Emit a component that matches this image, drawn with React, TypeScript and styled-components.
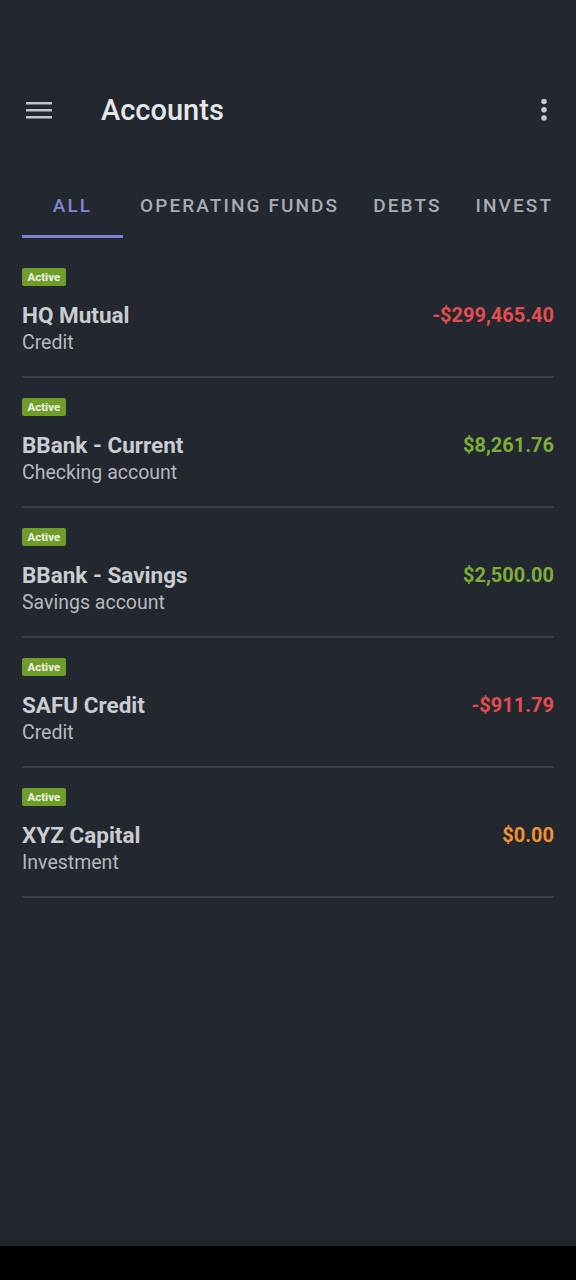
import React from "react";
import styled, { createGlobalStyle } from "styled-components";

const Global = createGlobalStyle`
  html, body { margin: 0; padding: 0; background: #000; }
  body { font-family: Roboto, "Noto Sans", "Liberation Sans", sans-serif; }
  * { box-sizing: border-box; }
`;

const Page = styled.div`
  width: 576px;
  height: 1280px;
  display: flex;
  flex-direction: column;
  background: #23272f;
  overflow: hidden;
`;

const StatusSpace = styled.div`
  height: 60px;
  flex: none;
`;

const Toolbar = styled.header`
  height: 100px;
  display: flex;
  align-items: center;
  padding: 0 22px 0 25px;
  flex: none;
`;

const IconButton = styled.button`
  width: 28px;
  height: 28px;
  padding: 0;
  border: 0;
  background: transparent;
  display: flex;
  align-items: center;
  justify-content: center;
`;

const Title = styled.h1`
  margin: 0 0 0 48px;
  font-size: 29px;
  font-weight: 500;
  color: #e6e7ea;
  flex: 1;
  letter-spacing: 0;
`;

const TabBar = styled.nav`
  margin-left: 22px;
  height: 78px;
  display: flex;
  flex: none;
`;

const Tab = styled.div<{ $active?: boolean }>`
  min-width: 101px;
  padding: 16px 17px 0;
  display: flex;
  align-items: center;
  justify-content: center;
  white-space: nowrap;
  flex: none;
  font-size: 19px;
  font-weight: 500;
  letter-spacing: 2.1px;
  color: ${(p) => (p.$active ? "#8185d8" : "#a9acb4")};
  border-bottom: 3px solid ${(p) => (p.$active ? "#7c80d4" : "transparent")};
`;

const List = styled.main`
  flex: 1;
  padding: 10px 22px 0 22px;
`;

const Item = styled.div`
  padding-top: 20px;
  border-bottom: 2px solid #393d46;
  padding-bottom: 19px;
`;

const Badge = styled.span`
  display: flex;
  width: fit-content;
  align-items: center;
  height: 18px;
  padding: 0 5.5px;
  border-radius: 2px;
  background: #6e9e29;
  color: #f2f4ec;
  font-size: 11.5px;
  font-weight: 700;
  margin-bottom: 15px;
`;

const Row = styled.div`
  display: flex;
  justify-content: space-between;
  align-items: center;
  height: 28px;
`;

const Name = styled.div`
  font-size: 22.5px;
  font-weight: 700;
  color: #caccd1;
`;

const Amount = styled.div<{ $tone: "neg" | "pos" | "zero" }>`
  font-size: 20px;
  font-weight: 700;
  color: ${(p) => (p.$tone === "neg" ? "#e34d4f" : p.$tone === "pos" ? "#7dae36" : "#f2922c")};
`;

const Subtitle = styled.div`
  font-size: 19.5px;
  line-height: 28px;
  color: #b7b9be;
`;

const NavBar = styled.div`
  height: 40px;
  flex: none;
  background: #000;
  border-top: 6px solid #1f252a;
`;

const accounts = [
  { name: "HQ Mutual", type: "Credit", amount: "-$299,465.40", tone: "neg" as const },
  { name: "BBank - Current", type: "Checking account", amount: "$8,261.76", tone: "pos" as const },
  { name: "BBank - Savings", type: "Savings account", amount: "$2,500.00", tone: "pos" as const },
  { name: "SAFU Credit", type: "Credit", amount: "-$911.79", tone: "neg" as const },
  { name: "XYZ Capital", type: "Investment", amount: "$0.00", tone: "zero" as const },
];

const tabs = ["ALL", "OPERATING FUNDS", "DEBTS", "INVEST"];

export default function App() {
  return (
    <Page>
      <Global />
      <StatusSpace />
      <Toolbar>
        <IconButton aria-label="menu">
          <svg width="28" height="22" viewBox="0 0 28 22">
            <g fill="#c4c6cc">
              <rect x="1" y="3" width="26" height="2.6" rx="0.5" />
              <rect x="1" y="10" width="26" height="2.6" rx="0.5" />
              <rect x="1" y="17" width="26" height="2.6" rx="0.5" />
            </g>
          </svg>
        </IconButton>
        <Title>Accounts</Title>
        <IconButton aria-label="more">
          <svg width="28" height="28" viewBox="0 0 28 28">
            <g fill="#c4c6cc">
              <circle cx="18" cy="5.5" r="2.8" />
              <circle cx="18" cy="13.8" r="2.8" />
              <circle cx="18" cy="22" r="2.8" />
            </g>
          </svg>
        </IconButton>
      </Toolbar>
      <TabBar>
        {tabs.map((t, i) => (
          <Tab key={t} $active={i === 0}>
            {t}
          </Tab>
        ))}
      </TabBar>
      <List>
        {accounts.map((a) => (
          <Item key={a.name}>
            <Badge>Active</Badge>
            <Row>
              <Name>{a.name}</Name>
              <Amount $tone={a.tone}>{a.amount}</Amount>
            </Row>
            <Subtitle>{a.type}</Subtitle>
          </Item>
        ))}
      </List>
      <NavBar />
    </Page>
  );
}
